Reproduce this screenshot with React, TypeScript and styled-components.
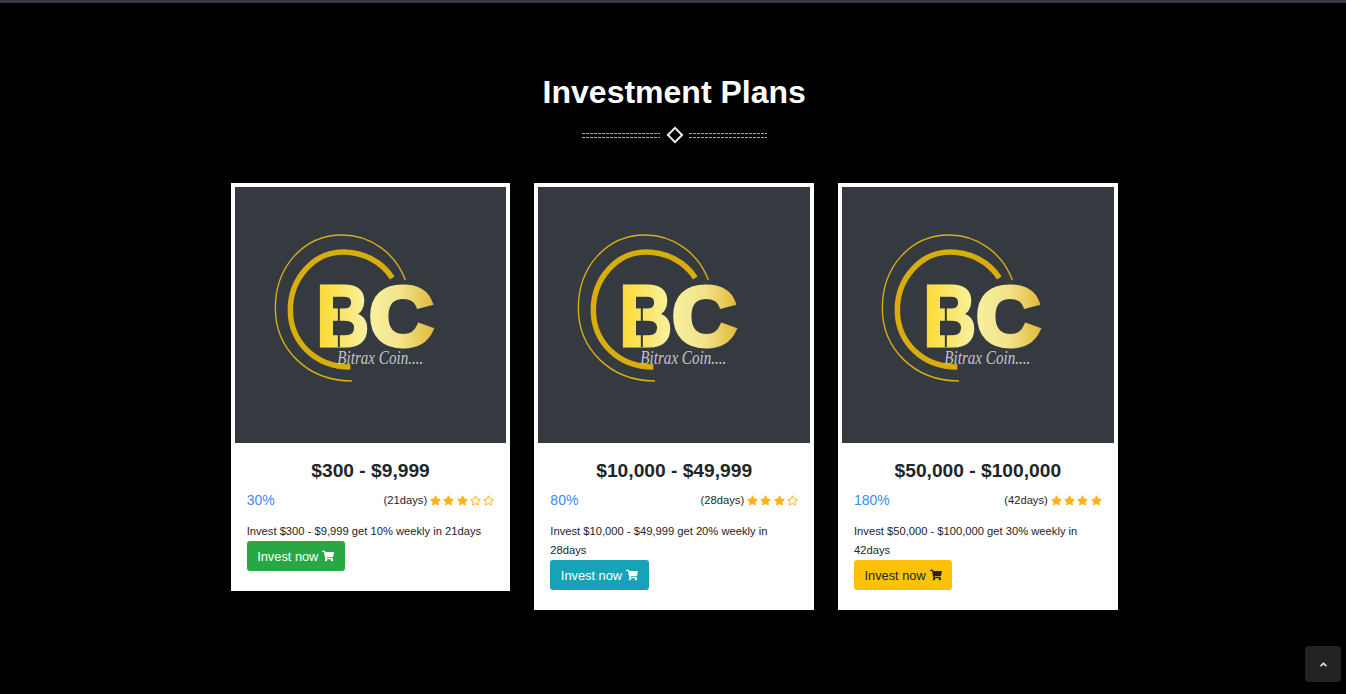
import styled, { createGlobalStyle } from 'styled-components';
import { FaAngleUp, FaRegStar, FaShoppingCart, FaStar } from 'react-icons/fa';

const GlobalStyle = createGlobalStyle`
  html, body {
    margin: 0;
    padding: 0;
    background: #000;
    font-family: 'Liberation Sans', Arial, sans-serif;
  }
`;

type Tone = 'success' | 'info' | 'warning';

const plans: {
  range: string;
  percent: string;
  days: string;
  stars: number;
  total: number;
  text: string;
  tone: Tone;
}[] = [
  { range: '$300 - $9,999', percent: '30%', days: '21days', stars: 3, total: 5, text: 'Invest $300 - $9,999 get 10% weekly in 21days', tone: 'success' },
  { range: '$10,000 - $49,999', percent: '80%', days: '28days', stars: 3, total: 4, text: 'Invest $10,000 - $49,999 get 20% weekly in 28days', tone: 'info' },
  { range: '$50,000 - $100,000', percent: '180%', days: '42days', stars: 4, total: 4, text: 'Invest $50,000 - $100,000 get 30% weekly in 42days', tone: 'warning' },
];

const Logo = ({ id }: { id: string }) => (
  <LogoSvg viewBox="0 0 271 256">
    <defs>
      <linearGradient id={id} gradientUnits="userSpaceOnUse" x1="82" y1="0" x2="199" y2="0">
        <stop offset="0" stopColor="#fbd92f" />
        <stop offset="0.42" stopColor="#f8f1a2" />
        <stop offset="0.72" stopColor="#f3e28a" />
        <stop offset="1" stopColor="#e0b93a" />
      </linearGradient>
    </defs>
    <path d="M170 93C160 66 135 48 107 48C68 48 40 80 40 121C40 162 72 194 116.7 194" fill="none" stroke="#d6ad12" strokeWidth="1.4" />
    <path d="M157 91C147 75 128 65 108 65C78 65 55 92 55 123C55 155 80 180 115 180" fill="none" stroke="#d8ae0c" strokeWidth="5.5" />
    <LogoLetter x="81" y="159" textLength="53" lengthAdjust="spacingAndGlyphs" fill={`url(#${id})`} stroke={`url(#${id})`} $size={87} $stroke={3}>B</LogoLetter>
    <LogoLetter x="134" y="158" textLength="64" lengthAdjust="spacingAndGlyphs" fill={`url(#${id})`} stroke={`url(#${id})`} $size={83} $stroke={5}>C</LogoLetter>
    <rect x="102.5" y="113" width="2" height="47" fill="#343a40" />
    <rect x="102.5" y="113" width="7" height="7" fill="#343a40" />
    <rect x="102.5" y="137" width="10" height="5" fill="#343a40" />
    <LogoCaption x="102" y="177" textLength="86" lengthAdjust="spacingAndGlyphs">Bitrax Coin....</LogoCaption>
  </LogoSvg>
);

const App = () => {
  return (
    <>
      <GlobalStyle />
      <TopBar />
      <Section>
        <Title>Investment Plans</Title>
        <Divider>
          <DottedLine />
          <Diamond />
          <DottedLine />
        </Divider>
        <PlanGrid>
          {plans.map((plan, i) => (
            <Card key={plan.range}>
              <ImageBox>
                <Logo id={`logo-gold-${i}`} />
              </ImageBox>
              <CardBody>
                <Range>{plan.range}</Range>
                <MetaRow>
                  <Percent>{plan.percent}</Percent>
                  <Duration>
                    <span>({plan.days})</span>
                    <Stars>
                      {Array.from({ length: plan.total }).map((_, n) =>
                        n < plan.stars ? <FaStar key={n} /> : <FaRegStar key={n} />,
                      )}
                    </Stars>
                  </Duration>
                </MetaRow>
                <Description>{plan.text}</Description>
                <InvestButton $tone={plan.tone}>
                  Invest now <FaShoppingCart />
                </InvestButton>
              </CardBody>
            </Card>
          ))}
        </PlanGrid>
      </Section>
      <BackToTop>
        <FaAngleUp />
      </BackToTop>
    </>
  );
};

const toneStyles: Record<Tone, { bg: string; fg: string }> = {
  success: { bg: '#28a745', fg: '#fff' },
  info: { bg: '#17a2b8', fg: '#fff' },
  warning: { bg: '#ffc107', fg: '#212529' },
};

const TopBar = styled.div`
  height: 3px;
  background: #343a40;
`;

const Section = styled.section`
  box-sizing: border-box;
  display: flex;
  flex-direction: column;
  align-items: center;
  min-height: 691px;
  padding: 70px 0 0 2.4px;
`;

const Title = styled.h2`
  margin: 0;
  color: #fff;
  font-size: 32px;
  font-weight: 700;
  line-height: 38px;
`;

const Divider = styled.div`
  display: flex;
  align-items: center;
  gap: 6.5px;
  margin-top: 16px;
  height: 16px;
`;

const DottedLine = styled.div`
  width: 78px;
  height: 5px;
  background:
    repeating-linear-gradient(90deg, #a8a8a8 0 3px, transparent 3px 4px) 0 0 / 100% 1px no-repeat,
    repeating-linear-gradient(90deg, #a8a8a8 0 3px, transparent 3px 4px) 0 4px / 100% 1px no-repeat;
`;

const Diamond = styled.div`
  box-sizing: border-box;
  width: 12px;
  height: 12px;
  margin: 0 1.5px 0 2.5px;
  border: 2px solid #f2f2f2;
  transform: rotate(45deg);
`;

const PlanGrid = styled.div`
  display: grid;
  grid-template-columns: repeat(3, 1fr);
  align-items: start;
  gap: 24px;
  width: 887px;
  margin-top: 40px;
`;

const Card = styled.article`
  box-sizing: border-box;
  border: 4px solid #fff;
  background: #fff;
`;

const ImageBox = styled.div`
  height: 256px;
  background: #343a40;
`;

const LogoSvg = styled.svg`
  display: block;
  width: 100%;
  height: 100%;
`;

const LogoLetter = styled.text<{ $size: number; $stroke: number }>`
  font-family: 'Liberation Sans', Arial, sans-serif;
  font-size: ${({ $size }) => $size}px;
  font-weight: 700;
  stroke-width: ${({ $stroke }) => $stroke}px;
`;

const LogoCaption = styled.text`
  fill: #c2c4cb;
  font-family: 'Liberation Serif', 'Times New Roman', serif;
  font-size: 18px;
  font-style: italic;
`;

const CardBody = styled.div`
  padding: 17px 12px 16px;
`;

const Range = styled.h4`
  margin: 0;
  color: #212529;
  font-size: 19.2px;
  font-weight: 700;
  line-height: 22px;
  text-align: center;
`;

const MetaRow = styled.div`
  display: flex;
  justify-content: space-between;
  align-items: center;
  margin-top: 7px;
  height: 22px;
`;

const Percent = styled.span`
  color: #3b8cf5;
  font-size: 14px;
`;

const Duration = styled.span`
  display: flex;
  align-items: center;
  gap: 3px;
  color: #212529;
  font-size: 11.2px;
`;

const Stars = styled.span`
  display: inline-flex;
  gap: 2.3px;
  color: #ffb31a;
  font-size: 11px;
`;

const Description = styled.p`
  margin: 11px 0 0;
  color: #212529;
  font-size: 11.2px;
  line-height: 19px;
`;

const InvestButton = styled.button<{ $tone: Tone }>`
  display: flex;
  align-items: center;
  gap: 4px;
  height: 30px;
  padding: 0 10.5px;
  border: 0;
  border-radius: 3px;
  background: ${({ $tone }) => toneStyles[$tone].bg};
  color: ${({ $tone }) => toneStyles[$tone].fg};
  font-family: inherit;
  font-size: 12.8px;
  white-space: nowrap;

  svg {
    width: 12px;
    height: 12px;
  }
`;

const BackToTop = styled.button`
  position: fixed;
  right: 5px;
  bottom: 12px;
  display: flex;
  align-items: center;
  justify-content: center;
  width: 36px;
  height: 36px;
  padding: 0;
  border: 0;
  border-radius: 4px;
  background: #222;
  color: #ddd;
  font-size: 11px;
`;

export default App;
